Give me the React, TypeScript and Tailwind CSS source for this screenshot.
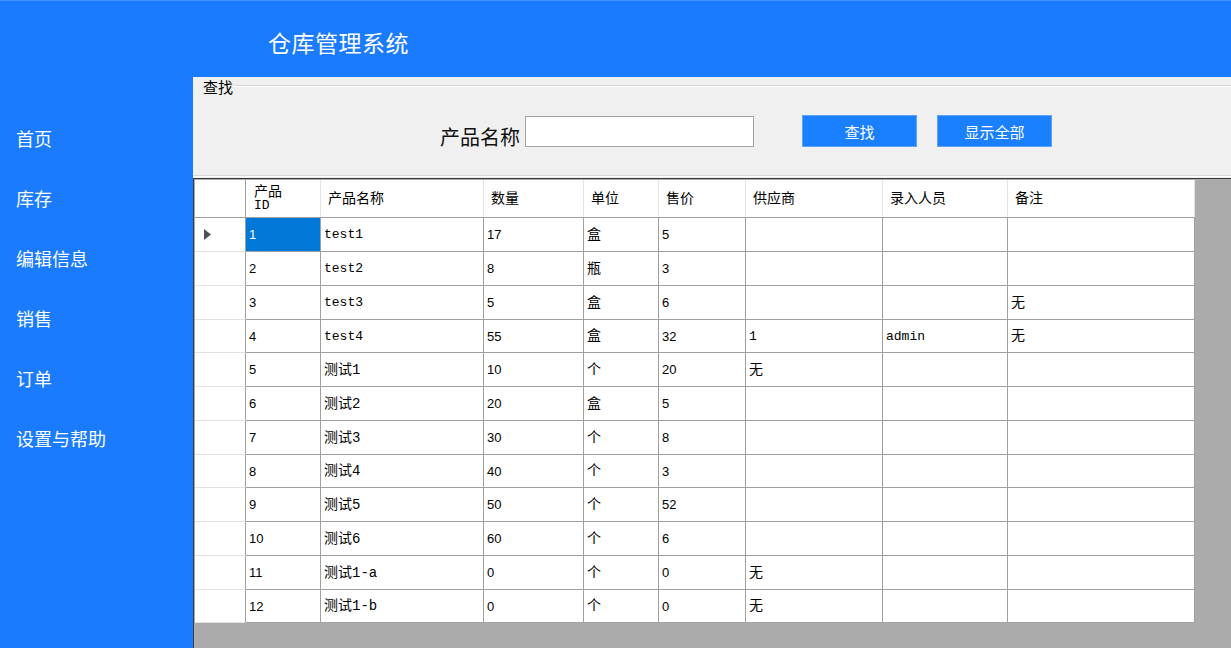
import React from "react";

const ui = "font-['Noto_Sans_CJK_SC','Microsoft_YaHei',sans-serif]";
const mono = "font-['Liberation_Mono','Noto_Sans_CJK_SC',monospace]";
const sans = "font-['Liberation_Sans','Noto_Sans_CJK_SC',sans-serif]";

const cols = "grid grid-cols-[51px_75px_163px_100px_75px_87px_137px_125px_187px]";

const headers = ["产品ID", "产品名称", "数量", "单位", "售价", "供应商", "录入人员", "备注"];
const colFont = [sans, mono, sans, mono, sans, mono, mono, mono];

const rows: { h: string; c: string[] }[] = [
  { h: "h-[34px]", c: ["1", "test1", "17", "盒", "5", "", "", ""] },
  { h: "h-[34px]", c: ["2", "test2", "8", "瓶", "3", "", "", ""] },
  { h: "h-[34px]", c: ["3", "test3", "5", "盒", "6", "", "", "无"] },
  { h: "h-[33px]", c: ["4", "test4", "55", "盒", "32", "1", "admin", "无"] },
  { h: "h-[34px]", c: ["5", "测试1", "10", "个", "20", "无", "", ""] },
  { h: "h-[34px]", c: ["6", "测试2", "20", "盒", "5", "", "", ""] },
  { h: "h-[34px]", c: ["7", "测试3", "30", "个", "8", "", "", ""] },
  { h: "h-[33px]", c: ["8", "测试4", "40", "个", "3", "", "", ""] },
  { h: "h-[34px]", c: ["9", "测试5", "50", "个", "52", "", "", ""] },
  { h: "h-[34px]", c: ["10", "测试6", "60", "个", "6", "", "", ""] },
  { h: "h-[34px]", c: ["11", "测试1-a", "0", "个", "0", "无", "", ""] },
  { h: "h-[33px]", c: ["12", "测试1-b", "0", "个", "0", "无", "", ""] },
];

const nav = ["首页", "库存", "编辑信息", "销售", "订单", "设置与帮助"];

export default function App() {
  return (
    <div className={`w-[1231px] h-[648px] flex flex-col bg-[#1a7bff] overflow-hidden ${ui}`}>
      <header className="h-[77px] shrink-0 flex items-center pl-[268px] pt-[6px] border-t border-[#3f91ff]">
        <span className="text-[23px] text-white leading-none tracking-[0.5px]">仓库管理系统</span>
      </header>
      <div className="flex flex-1 min-h-0">
        <aside className="w-[193px] shrink-0 flex flex-col pt-[31px]">
          {nav.map((n) => (
            <div key={n} className="h-[60px] flex items-center pl-[16px] text-[18px] text-white leading-none">
              {n}
            </div>
          ))}
        </aside>
        <main className="flex-1 flex flex-col bg-[#f0f0f0] min-w-0">
          {/* group box */}
          <section className="h-[101px] shrink-0 flex flex-col pt-[1px]">
            <div className="h-[16px] flex items-center">
              <span className="ml-[10px] pr-[1px] text-[15px] leading-[15px] text-black">查找</span>
              <div className="flex-1 h-[2px] border-t border-[#d8d8d8] border-b border-b-white" />
            </div>
            <div className="flex items-start pl-[247px] mt-[22px]">
              <span className="mt-[11px] text-[20px] leading-none text-[#111]">产品名称</span>
              <div className="ml-[5px] w-[229px] h-[31px] bg-white border border-[#a3a3a3]" />
              <button className="ml-[48px] -mt-[1px] w-[115px] h-[32px] bg-[#1a80ff] border border-[#5ea4ff] text-white text-[15px] leading-none">
                查找
              </button>
              <button className="ml-[20px] -mt-[1px] w-[115px] h-[32px] bg-[#1a80ff] border border-[#5ea4ff] text-white text-[15px] leading-none">
                显示全部
              </button>
            </div>
            <div className="mt-auto mb-[1px] h-[2px] border-t border-[#d8d8d8] border-b border-b-white" />
          </section>
          {/* data grid */}
          <section className="flex-1 bg-[#ababab] border-t border-l border-[#3a3a3a] pt-[1px] pl-[1px]">
            <div className="w-[1000px] bg-white">
              <div className={`${cols} h-[38px] border-b border-[#a0a0a0]`}>
                <div className="border-r border-[#a0a0a0]" />
                {headers.map((h, i) => (
                  <div
                    key={h}
                    className={`flex items-center border-r border-[#e4e4e4] text-[14px] text-black ${i === 0 ? "pl-[8px]" : "pl-[7px]"} ${mono}`}
                  >
                    {i === 0 ? (
                      <span className="leading-[13px] flex flex-col">
                        <span>产品</span>
                        <span className="text-[13px]">ID</span>
                      </span>
                    ) : (
                      <span className="leading-none">{h}</span>
                    )}
                  </div>
                ))}
              </div>
              {rows.map((r, ri) => (
                <div key={ri} className={`${cols} ${r.h}`}>
                  <div className="flex items-center pl-[9px] border-r border-b border-r-[#a0a0a0] border-b-[#e2e2e2]">
                    {ri === 0 && (
                      <svg width="7" height="11" viewBox="0 0 7 11">
                        <polygon points="0,0 7,5.5 0,11" fill="#505050" />
                      </svg>
                    )}
                  </div>
                  {r.c.map((v, ci) => (
                    <div
                      key={ci}
                      className={`flex items-center border-r border-b border-[#a0a0a0] pl-[3px] leading-none text-[13px] ${colFont[ci]} ${
                        ri === 0 && ci === 0 ? "bg-[#0078d7] text-white" : "text-black"
                      }`}
                    >
                      <span className={/[\u4e00-\u9fff]/.test(v) ? "text-[14px]" : ""}>{v}</span>
                    </div>
                  ))}
                </div>
              ))}
            </div>
          </section>
        </main>
      </div>
    </div>
  );
}
